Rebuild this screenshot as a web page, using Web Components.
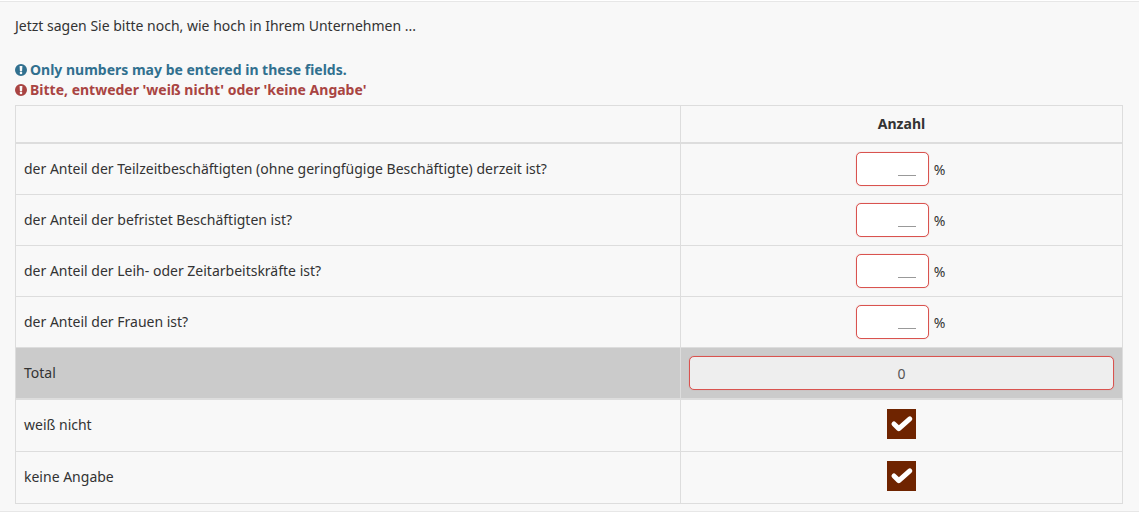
<!DOCTYPE html>
<html lang="de">
<head>
<meta charset="utf-8">
<title>Anzahl</title>
<style>
html, body { margin: 0; padding: 0; background: #fff; }
body { font: 14px/20px "Noto Sans", "Open Sans", sans-serif; color: #333; }
</style>
</head>
<body>
<template id="panel-tpl">
  <style>
    :host { display: block; height: 511px; box-sizing: border-box; margin-top: 1px; padding: 14px 16px 0 15px;
      background: #f8f8f8; border-top: 1px solid #e7e7e7; border-bottom: 1px solid #e7e7e7; }
    .question { margin-bottom: 24px; height: 20px; }
    ::slotted(survey-grid) { margin-top: 5px; }
  </style>
  <div class="question"><slot name="question"></slot></div>
  <slot></slot>
</template>

<template id="alert-tpl">
  <style>
    :host { display: block; font-weight: 700; color: var(--alert-color); height: 20px; }
    .row { display: flex; align-items: center; gap: 3px; height: 20px; }
    svg { width: 12px; height: 12px; flex: none; }
  </style>
  <div class="row">
    <svg viewBox="0 0 24 24"><path fill="currentColor" fill-rule="evenodd" d="M12 0a12 12 0 1 0 0 24a12 12 0 0 0 0-24zM9.2 4h5.6l-.6 10h-4.4zM12 15.2a2.6 2.6 0 1 1 0 5.2a2.6 2.6 0 0 1 0-5.2z"/></svg>
    <span><slot></slot></span>
  </div>
</template>

<template id="grid-tpl">
  <style>
    :host { display: block; border: 1px solid #ddd; }
  </style>
  <slot></slot>
</template>

<template id="row-tpl">
  <style>
    :host { display: grid; grid-template-columns: 664px 1fr; height: var(--row-h, 51px); box-sizing: border-box;
      border-bottom: var(--row-line, 1px) solid #ddd; }
    :host(:last-child) { border-bottom: 0; }
    :host([total]) { background: #cbcbcb; border-bottom: 2px solid #ddd; }
    :host([raised]) .label { padding-bottom: 2px; }
    .label { display: flex; align-items: center; padding: 0 8px; }
    .value { display: flex; align-items: center; justify-content: center; border-left: 1px solid #ddd; padding: 0 8px; }
    :host([head]) .value { font-weight: 700; }
  </style>
  <div class="label"><slot name="label"></slot></div>
  <div class="value"><slot></slot></div>
</template>

<template id="percent-tpl">
  <style>
    :host { display: flex; align-items: center; padding-right: 2px; }
    .box { width: 73px; height: 34px; box-sizing: border-box; background: #fff; border: 1px solid #d9534f; border-radius: 5px;
      box-shadow: 0 0 1px rgba(217, 83, 79, .5); position: relative; margin-right: 5px; }
    .blank { position: absolute; right: 12px; bottom: 9px; width: 18px; border-bottom: 1px solid #999; }
    .unit { position: relative; top: 1px; }
  </style>
  <div class="box"><span class="blank"></span></div>
  <span class="unit">%</span>
</template>

<template id="total-tpl">
  <style>
    :host { display: flex; align-items: center; justify-content: center; box-sizing: border-box; width: 100%; height: 34px;
      background: #eee; border: 1px solid #d9534f; border-radius: 5px; box-shadow: 0 0 1px rgba(217, 83, 79, .5);
      color: #555; padding-top: 1px; }
  </style>
  <slot></slot>
</template>

<template id="check-tpl">
  <style>
    :host { display: block; width: 29px; height: 30px; background: #6f2400; position: relative; top: -2px; }
    svg { display: block; width: 29px; height: 30px; }
  </style>
  <svg viewBox="0 0 29 30"><path d="M7 15l4.8 4.6L22.8 9.8" fill="none" stroke="#fff" stroke-width="5" stroke-linecap="round" stroke-linejoin="round"/></svg>
</template>

<survey-panel>
  <span slot="question">Jetzt sagen Sie bitte noch, wie hoch in Ihrem Unternehmen ...</span>
  <survey-alert color="#31708f">Only numbers may be entered in these fields.</survey-alert>
  <survey-alert color="#a94442">Bitte, entweder 'weiß nicht' oder 'keine Angabe'</survey-alert>
  <survey-grid>
    <survey-row head style="--row-h: 38px; --row-line: 2px">Anzahl</survey-row>
    <survey-row><span slot="label">der Anteil der Teilzeitbeschäftigten (ohne geringfügige Beschäftigte) derzeit ist?</span><percent-input></percent-input></survey-row>
    <survey-row><span slot="label">der Anteil der befristet Beschäftigten ist?</span><percent-input></percent-input></survey-row>
    <survey-row><span slot="label">der Anteil der Leih- oder Zeitarbeitskräfte ist?</span><percent-input></percent-input></survey-row>
    <survey-row><span slot="label">der Anteil der Frauen ist?</span><percent-input></percent-input></survey-row>
    <survey-row total style="--row-h: 52px"><span slot="label">Total</span><total-field>0</total-field></survey-row>
    <survey-row raised style="--row-h: 52px"><span slot="label">weiß nicht</span><check-box></check-box></survey-row>
    <survey-row raised><span slot="label">keine Angabe</span><check-box></check-box></survey-row>
  </survey-grid>
</survey-panel>

<script>
// each element just clones its template into an open shadow root
function simpleElement(tag, templateId) {
  class SimpleElement extends HTMLElement {
    constructor() {
      super();
      this.attachShadow({mode: 'open'});
      this.shadowRoot.appendChild(document.getElementById(templateId).content.cloneNode(true));
    }
  }
  customElements.define(tag, SimpleElement);
}

simpleElement('survey-panel', 'panel-tpl');
simpleElement('survey-grid', 'grid-tpl');
simpleElement('survey-row', 'row-tpl');
simpleElement('percent-input', 'percent-tpl');
simpleElement('total-field', 'total-tpl');
simpleElement('check-box', 'check-tpl');

class SurveyAlert extends HTMLElement {
  constructor() {
    super();
    this.attachShadow({mode: 'open'});
    this.shadowRoot.appendChild(document.getElementById('alert-tpl').content.cloneNode(true));
  }

  connectedCallback() {
    this.style.setProperty('--alert-color', this.getAttribute('color'));
  }
}
customElements.define('survey-alert', SurveyAlert);
</script>
</body>
</html>
